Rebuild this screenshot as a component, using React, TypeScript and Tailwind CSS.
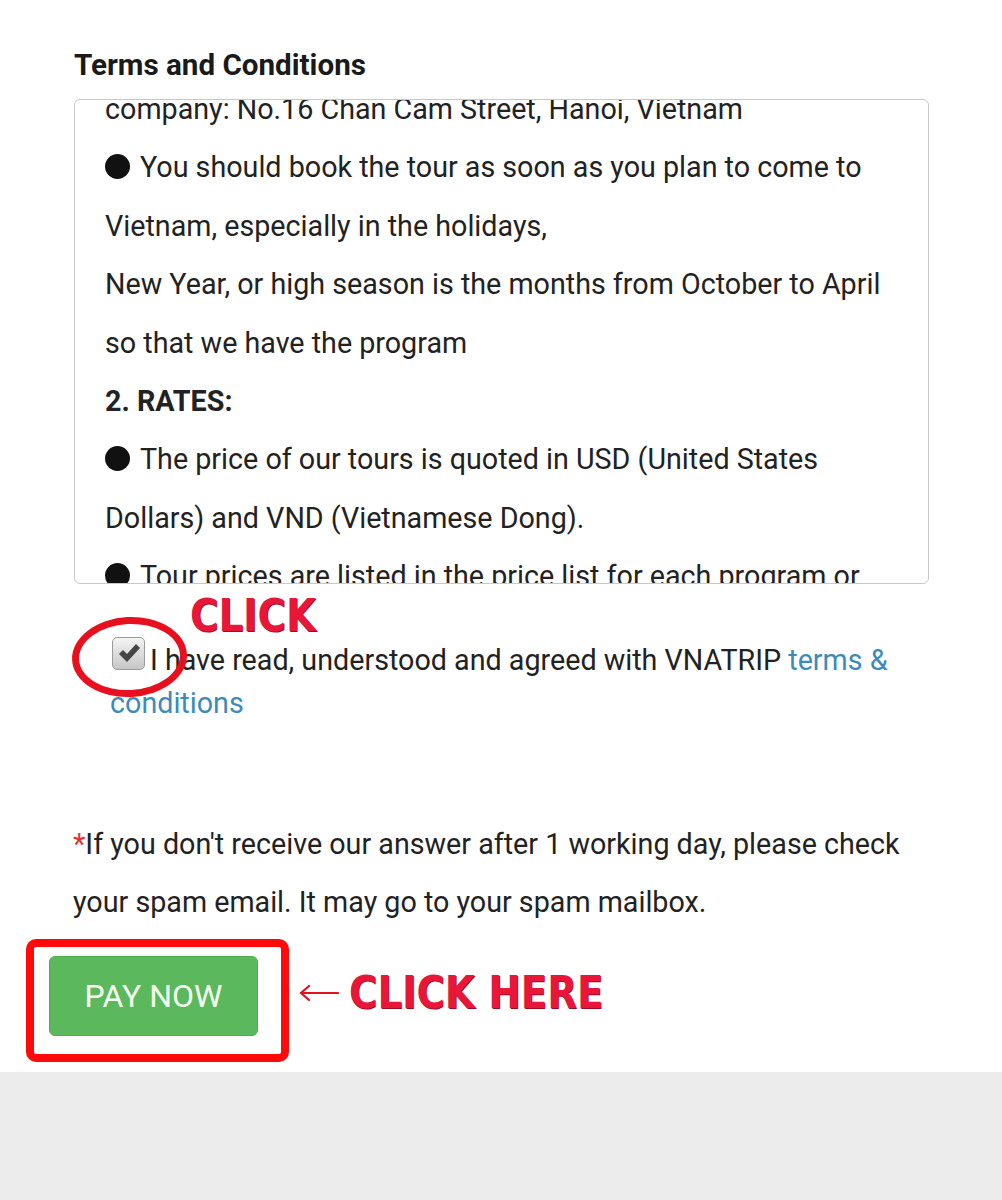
import { useState } from "react";

const lines: { text: string; bullet?: boolean; bold?: boolean }[] = [
  { text: "company: No.16 Chan Cam Street, Hanoi, Vietnam" },
  { text: "You should book the tour as soon as you plan to come to", bullet: true },
  { text: "Vietnam, especially in the holidays," },
  { text: "New Year, or high season is the months from October to April" },
  { text: "so that we have the program" },
  { text: "2. RATES:", bold: true },
  { text: "The price of our tours is quoted in USD (United States", bullet: true },
  { text: "Dollars) and VND (Vietnamese Dong)." },
  { text: "Tour prices are listed in the price list for each program or", bullet: true },
  { text: "the price may vary depending on the number of passengers." },
];

function CheckBox() {
  return (
    <span className="relative top-[-12px] inline-flex align-[-6px] w-[33px] h-[33px] ml-[2px] mr-[5px] rounded-[5px] border border-[#9a9a9a] bg-gradient-to-b from-[#f4f4f4] to-[#c6c6c6] items-center justify-center">
      <svg width="24" height="22" viewBox="0 0 24 22">
        <path d="M2 12 L6 8 L10 12 L19 2 L23 6 L10 20 Z" fill="#454545" />
      </svg>
    </span>
  );
}

export default function App() {
  const [agreed, setAgreed] = useState(true);
  return (
    <div className="min-h-[1200px] bg-white font-['Roboto',sans-serif] text-[#222] flex flex-col">
      <div className="pl-[74px] pt-[45px] pr-[60px]">
        <h3 className="text-[29.6px] leading-[40px] font-bold text-[#1a1a1a] mb-[14px]">
          Terms and Conditions
        </h3>
        <div className="w-[855px] h-[485px] border border-[#c8c8c8] rounded-[6px] overflow-hidden">
          <div className="mt-[-20px] pl-[30px]">
            {lines.map((l, i) => (
              <p
                key={i}
                className={
                  "whitespace-nowrap text-[28.7px] leading-[58.4px] " +
                  (l.bold ? "font-bold" : "")
                }
              >
                {l.bullet && (
                  <span className="inline-block w-[25px] h-[25px] rounded-full bg-[#111] align-[-2px] mr-[10px]" />
                )}
                {l.text}
              </p>
            ))}
          </div>
        </div>

        <div className="relative mt-[55px] pl-[36px] text-[28.7px] leading-[42px]">
          <span onClick={() => setAgreed(!agreed)} className="cursor-pointer">
            {agreed && <CheckBox />}
          </span>
          I have read, understood and agreed with VNATRIP{" "}
          <a className="text-[#3d8bb8]">terms &amp; conditions</a>
          <span className="absolute left-[-2px] top-[-22px] w-[115px] h-[80px] rounded-[50%] border-[7px] border-[#e8101e] -rotate-3" />
          <span className="absolute left-[116px] top-[-47px] origin-left scale-x-[0.88] font-['DejaVu_Sans',sans-serif] font-bold text-[44px] leading-[48px] text-[#e8173a] [text-shadow:1px_1px_0_#9b0d22]">
            CLICK
          </span>
        </div>

        <p className="mt-[91px] text-[28.7px] leading-[58.4px] w-[850px] ml-[-1px]">
          <span className="text-[#e0332e]">*</span>If you don't receive our answer after 1 working day, please check your spam email. It may go to your spam mailbox.
        </p>

        <div className="mt-[8px] ml-[-48px] flex items-start">
          <div className="w-[263px] h-[123px] rounded-[10px] border-[8px] border-[#ff0a0a] pt-[9px] pl-[15px]">
            <button className="w-[209px] h-[80px] rounded-[6px] bg-[#5cb85c] border border-[#4cae4c] text-[32px] text-[#f4fff0]">
              PAY NOW
            </button>
          </div>
          <svg width="40" height="20" viewBox="0 0 40 20" className="ml-[10px] mt-[44px]">
            <path d="M39 10 H3 M10 3 L2 10 L10 17" stroke="#e8101e" strokeWidth="2.2" fill="none" strokeLinecap="round" />
          </svg>
          <span className="ml-[10px] mt-[31px] origin-left scale-x-[0.86] whitespace-nowrap font-['DejaVu_Sans',sans-serif] font-bold text-[45px] leading-none text-[#e8173a] [text-shadow:1px_1px_0_#9b0d22]">
            CLICK HERE
          </span>
        </div>
      </div>
      <div className="mt-[10px] flex-1 bg-[#ececec]" />
    </div>
  );
}
